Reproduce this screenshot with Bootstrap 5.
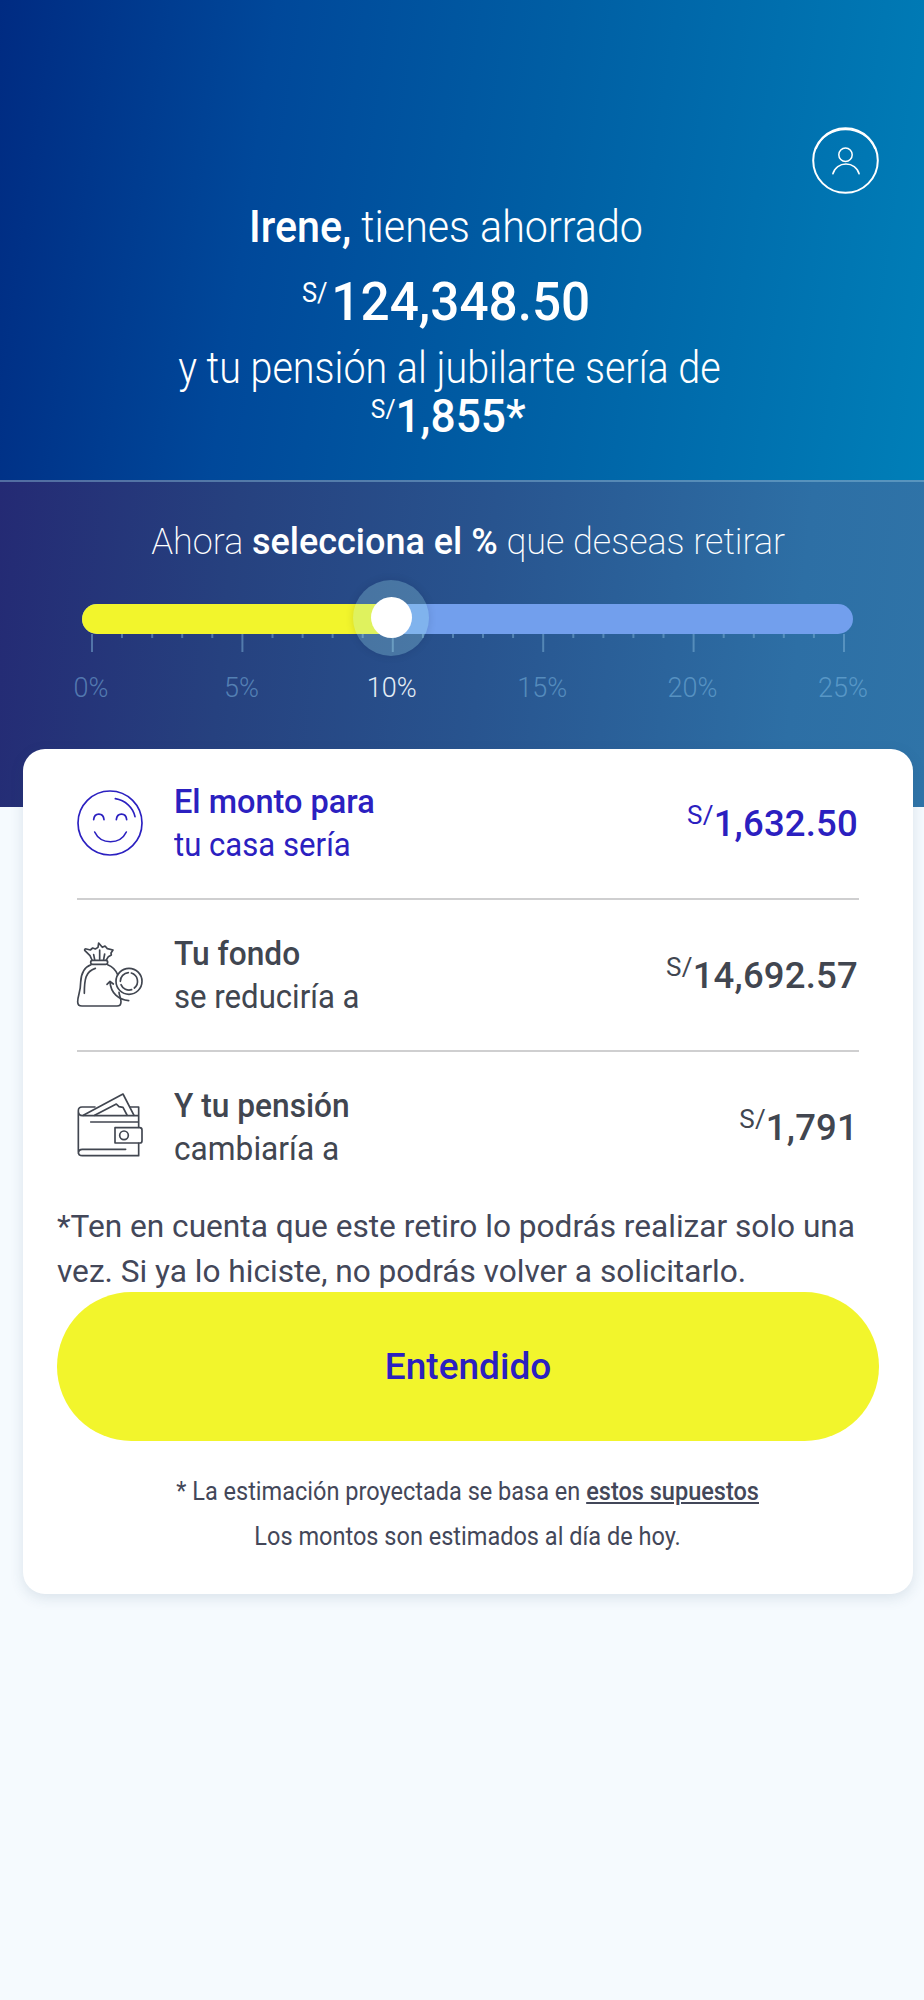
<!DOCTYPE html>
<html lang="es">
<head>
<meta charset="utf-8">
<meta name="viewport" content="width=device-width, initial-scale=1">
<title>Retiro de fondo</title>
<link href="https://cdn.jsdelivr.net/npm/bootstrap@5.3.0/dist/css/bootstrap.min.css" rel="stylesheet">
<style>
body{font-family:Roboto,"Open Sans",sans-serif;background:#f5fafe;color:#414650;min-height:2000px}
.fit{display:inline-block;white-space:nowrap;transform:scaleX(var(--k,1))}
.fit-l{transform-origin:left}
.k91{--k:.916}.k89{--k:.897}.k94{--k:.941}.k95{--k:.96}.k96{--k:.958}.k97{--k:.975}.k101{--k:1.015}.k99{--k:.988}
b,strong{font-weight:500}
.hero{height:480px;padding-top:127px;background:linear-gradient(98deg,#002b82 0%,#00489a 28%,#005fa4 58%,#007fb8 100%)}
.profile{width:67px;height:67px;margin-right:45px}
.summary{padding:3px 31px 0 0;font-weight:300}
.summary p{margin:0}
.summary .s1{font-size:45px;line-height:60px}
.summary .s2{font-size:54.5px;line-height:70px;margin-top:9px}
.summary .s3{font-size:44px;line-height:60px;margin:2px -6px 0 0}
.summary .s4{font-size:47px;line-height:50px;margin:-7px -4px 0 0}
.cur{font-weight:400;line-height:0}
.s2 .cur{font-size:27px;vertical-align:18px;margin-right:4px}
.s4 .cur{font-size:26px;vertical-align:14px}
.amt .cur{font-size:26px;vertical-align:12px}
.picker{height:327px;border-top:2px solid rgba(140,190,220,.45);padding:32px 71px 0 82px;background:linear-gradient(96deg,#242a74 0%,#26417f 25%,#28548f 52%,#2d6fa5 85%,#2f74a8 100%) border-box}
.picker h2{font-size:37.5px;line-height:54px;font-weight:200;margin:0 0 36px;padding-left:2px}
.slide-bar{height:30px;border-radius:15px;background:#729fed}
.slide-fill{width:309px;background:#f2f52c}
.thumb{left:271px;top:-24.5px;width:76px;height:76px;background:rgba(170,235,240,.26);box-shadow:0 0 8px rgba(0,0,40,.12)}
.thumb i{width:41px;height:41px}
.ticks{display:block;width:754px;height:18px;margin-left:9px}
.pct{font-size:27px;line-height:40px;font-weight:300;color:rgba(130,190,230,.5);margin:16px -40px 0 -41px}
.pct span{width:100px;text-align:center}
.pct .on{color:#e3edf6}
.result{margin:-58.5px 11px 0 23px;border-radius:22px;height:845px;padding:0 34px;box-shadow:0 4px 14px rgba(40,70,100,.13)}
.item{margin:0 20px;height:152px;border-bottom:2px solid #cfcfd0;padding-top:2px}
.item:first-child{height:151px}
.item.end{border-color:transparent}
.item svg{width:66px;height:66px;margin-right:31px;flex:none;overflow:visible}
.item path,.item circle,.item rect{fill:none;stroke:currentColor;stroke-width:5;stroke-linecap:round;stroke-linejoin:round}
.lbl{font-size:32.5px;line-height:43px}
.amt{font-size:36.5px;font-weight:500;line-height:50px;letter-spacing:.2px;padding-right:1px}
.ink{color:#2b20c0}
.note{font-size:32px;line-height:45px;margin:0 0 -2px;color:#434759}
.go{height:149px;border-radius:75px;background:#f2f52c;color:#2b20c0;font-size:36.5px;font-weight:500;width:100%;padding-top:8px}
.go:hover{background:#f2f52c}
.foot{font-size:25px;line-height:45px;margin-top:28px;color:#434759}
</style>
</head>
<body>
<header class="hero text-white">
  <div class="d-flex justify-content-end">
    <svg class="profile" viewBox="0 0 67 67" fill="none" stroke="#fff"><circle cx="33.500" cy="33.500" r="32.300" stroke-width="2"/><path d="M4 22C14-4 53-4 63 22" stroke-width="1.500"/><circle cx="33.500" cy="27.700" r="6.700" stroke-width="1.500"/><path d="M20.700 47.300C24 33.500 44 33.500 47.300 47.300" stroke-width="1.500"/></svg>
  </div>
  <div class="summary text-center">
    <p class="s1"><span class="fit k91"><b>Irene,</b> tienes ahorrado</span></p>
    <p class="s2"><span class="fit k94"><span class="cur">S/</span><b>124,348.50</b></span></p>
    <p class="s3"><span class="fit k89">y tu pensión al jubilarte sería de</span></p>
    <p class="s4"><span class="fit k94"><span class="cur">S/</span><b>1,855*</b></span></p>
  </div>
</header>
<section class="picker text-white">
  <h2 class="text-center"><span class="fit k95">Ahora <b>selecciona el %</b> que deseas retirar</span></h2>
  <div class="position-relative">
    <div class="slide-bar d-flex overflow-hidden"><div class="slide-fill"></div></div>
    <svg class="ticks" viewBox="0 0 754 18" stroke="#7fb4d8" stroke-opacity=".5" stroke-width="2"><path d="M1 0V18M151.400 0V18M301.800 0V18M452.200 0V18M602.600 0V18M753 0V18"/><path d="M31 0V4M61.200 0V4M91.200 0V4M121.300 0V4M181.500 0V4M211.600 0V4M241.600 0V4M271.700 0V4M331.900 0V4M362 0V4M392 0V4M422.100 0V4M482.300 0V4M512.400 0V4M542.400 0V4M572.500 0V4M632.700 0V4M662.800 0V4M692.800 0V4M722.900 0V4"/></svg>
    <div class="thumb rounded-circle position-absolute d-flex align-items-center justify-content-center"><i class="bg-white rounded-circle"></i></div>
  </div>
  <div class="pct d-flex justify-content-between"><span>0%</span><span>5%</span><span class="on">10%</span><span>15%</span><span>20%</span><span>25%</span></div>
</section>
<main class="result bg-white">
  <div class="item d-flex align-items-center ink">
    <svg viewBox="20 21 198 198"><circle cx="119" cy="117" r="96"/><path d="M135 44C165 49 188 71 194 98M70 107C72 85 99 85 101 107M138 107C140 85 167 85 169 107M73 144C92 183 149 183 168 144"/></svg>
    <div class="lbl"><b class="fit fit-l">El monto para</b><br><span class="fit fit-l k96">tu casa sería</span></div>
    <div class="amt ms-auto"><span class="cur">S/</span>1,632.50</div>
  </div>
  <div class="item d-flex align-items-center">
    <svg viewBox="20 27 198 198"><path d="M62 92C40 100 32 118 31 145C31 175 22 185 22 203Q22 216 35 216H140Q152 216 152 203C152 194 147 184 146 175M112 92C128 98 137 110 142 122M75 103C46 112 42 135 42 178"/><rect x="61" y="79" width="51" height="12" rx="6"/><path d="M65 78L59 65L43 49Q42 44 48 45L60 48L67 42L75 45L83 40L85 27L96 40L104 36L111 44L128 48L122 57L123 63L114 68L108 78M73 77L70 62M88 76V48M100 76L103 60"/><circle cx="176" cy="142" r="39"/><path d="M183 117A26 26 0 0 1 192 162M184 167A26 26 0 0 1 152 152M150 142A26 26 0 0 1 174 116"/><path d="M175 200C145 197 121 178 119 143M110 151L119 142L129 150"/></svg>
    <div class="lbl"><b class="fit fit-l k97">Tu fondo</b><br><span class="fit fit-l k96">se reduciría a</span></div>
    <div class="amt ms-auto"><span class="cur">S/</span>14,692.57</div>
  </div>
  <div class="item end d-flex align-items-center">
    <svg viewBox="20 33 198 198"><path d="M74 69H35Q24 69 24 80V203Q24 215 36 215H205V178M205 130V69H179M24 83Q25 95 36 95H205M61 114H204M24 207Q25 196 36 196H166"/><path d="M39 94L158 30L191 94M73 94L138 60L146 68L158 70L170 93"/><path d="M134 131H208Q215 131 215 138V170Q215 177 208 177H134Z"/><circle cx="161" cy="154" r="13"/></svg>
    <div class="lbl"><b class="fit fit-l k97">Y tu pensión</b><br><span class="fit fit-l k97">cambiaría a</span></div>
    <div class="amt ms-auto"><span class="cur">S/</span>1,791</div>
  </div>
  <p class="note"><span class="fit fit-l k99">*Ten en cuenta que este retiro lo podrás realizar solo una</span><br><span class="fit fit-l k99">vez. Si ya lo hiciste, no podrás volver a solicitarlo.</span></p>
  <button class="btn go"><span class="fit k101">Entendido</span></button>
  <div class="foot text-center"><span class="fit k94">* La estimación proyectada se basa en <b><u>estos supuestos</u></b></span><br><span class="fit k94">Los montos son estimados al día de hoy.</span></div>
</main>
<script src="https://cdn.jsdelivr.net/npm/bootstrap@5.3.0/dist/js/bootstrap.bundle.min.js"></script>
</body>
</html>
